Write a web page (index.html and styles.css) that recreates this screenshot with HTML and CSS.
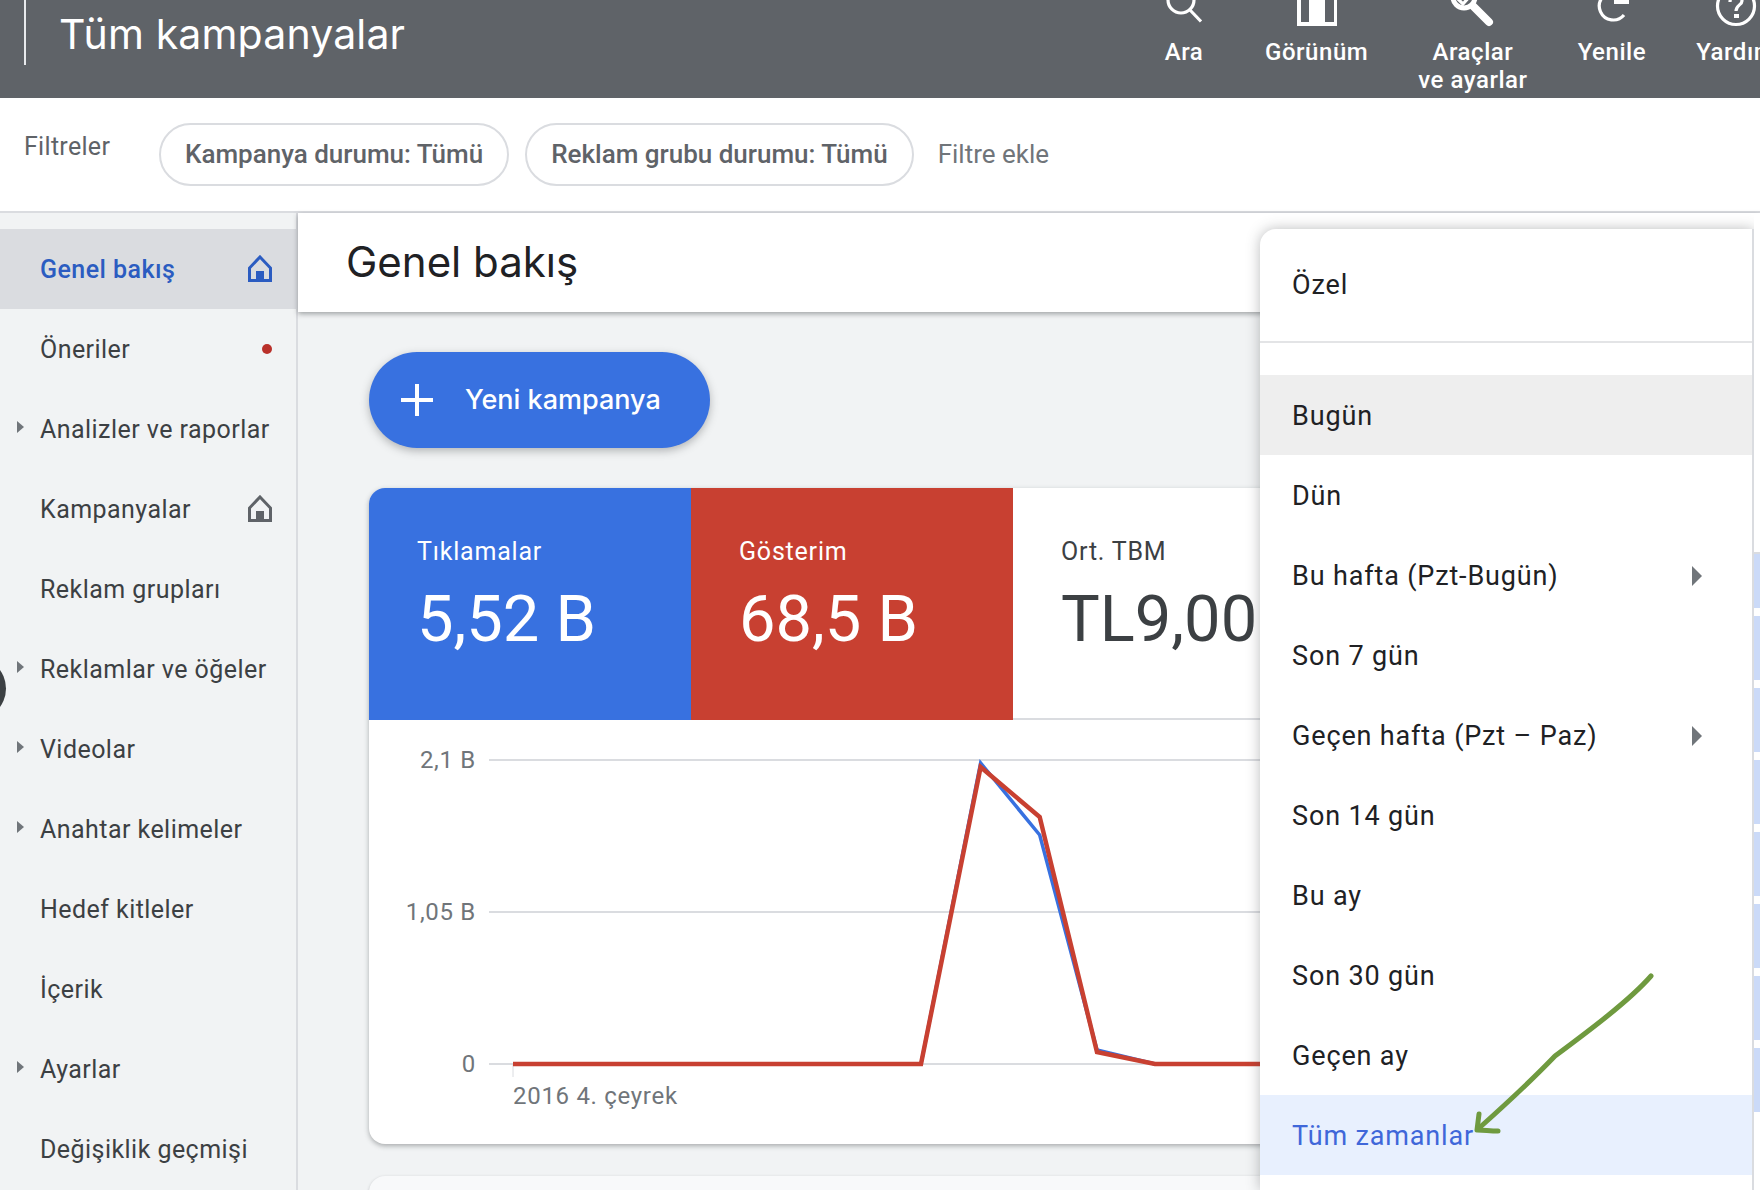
FILE: index.html
```html
<!DOCTYPE html>
<html>
<head>
    <meta http-equiv="Content-Type" content="text/html; charset=UTF-8">
    <title>Tüm kampanyalar</title>
    <link rel="stylesheet" href="styles.css">
</head>

<body>
    <div class="page">
        <div class="topbar">
            <div class="topbar-rule"></div>
            <div class="topbar-title">Tüm kampanyalar</div>
            <div class="actions">
                <div class="action action-search">
                    <svg class="action-icon" viewBox="0 0 48 34">
                        <circle cx="21" cy="0" r="13" class="icon-line"/>
                        <path d="M30 10 L41 21.5" class="icon-line"/>
                    </svg>
                    <span>Ara</span>
                </div>
                <div class="action">
                    <svg class="action-icon" viewBox="0 0 48 34">
                        <path d="M4 -4 H44 V26 H4 Z M8 -4 V22 H16 V-4 Z M32 -4 V22 H41 V-4 Z" class="icon-fill" fill-rule="evenodd"/>
                    </svg>
                    <span>Görünüm</span>
                </div>
                <div class="action">
                    <svg class="action-icon" viewBox="0 0 48 34">
                        <circle cx="15" cy="-3" r="11" class="icon-line icon-thick"/>
                        <path d="M24 6 L40 22" class="icon-line icon-handle"/>
                        <path d="M9 -1 L14 4 L21 -4" class="icon-line"/>
                    </svg>
                    <span>Araçlar<br>ve ayarlar</span>
                </div>
                <div class="action">
                    <svg class="action-icon" viewBox="0 0 48 34">
                        <path d="M26 -8 A14 14 0 1 0 36 15" class="icon-line"/>
                        <rect x="26" y="-4" width="15" height="8" class="icon-fill"/>
                    </svg>
                    <span>Yenile</span>
                </div>
                <div class="action">
                    <svg class="action-icon" viewBox="0 0 48 34">
                        <circle cx="24" cy="6" r="18.5" class="icon-line"/>
                        <path d="M18 2 C18 -6 30 -6 30 1 C30 5 24 5 24 11" class="icon-line"/>
                        <rect x="22" y="14" width="5" height="4" class="icon-fill"/>
                    </svg>
                    <span>Yardım</span>
                </div>
            </div>
        </div>

        <div class="filters">
            <div class="filters-label">Filtreler</div>
            <div class="chip">Kampanya durumu: Tümü</div>
            <div class="chip">Reklam grubu durumu: Tümü</div>
            <div class="filters-add">Filtre ekle</div>
        </div>

        <div class="content">
            <div class="sidebar">
                <div class="nav-row nav-active">
                    <span class="nav-arrow"></span>Genel bakış
                    <svg class="nav-home" viewBox="0 0 24 27">
                        <path d="M12 2 L22.5 13 V25.5 H1.5 V13 Z" class="home-line"/>
                        <rect x="8" y="16" width="8" height="9" class="home-door"/>
                    </svg>
                </div>
                <div class="nav-row"><span class="nav-arrow"></span>Öneriler<span class="nav-dot"></span></div>
                <div class="nav-row"><span class="nav-arrow nav-arrow-on"></span>Analizler ve raporlar</div>
                <div class="nav-row">
                    <span class="nav-arrow"></span>Kampanyalar
                    <svg class="nav-home" viewBox="0 0 24 27">
                        <path d="M12 2 L22.5 13 V25.5 H1.5 V13 Z" class="home-line"/>
                        <rect x="8" y="16" width="8" height="9" class="home-door"/>
                    </svg>
                </div>
                <div class="nav-row"><span class="nav-arrow"></span>Reklam grupları</div>
                <div class="nav-row"><span class="nav-arrow nav-arrow-on"></span>Reklamlar ve öğeler</div>
                <div class="nav-row"><span class="nav-arrow nav-arrow-on"></span>Videolar</div>
                <div class="nav-row"><span class="nav-arrow nav-arrow-on"></span>Anahtar kelimeler</div>
                <div class="nav-row"><span class="nav-arrow"></span>Hedef kitleler</div>
                <div class="nav-row"><span class="nav-arrow"></span>İçerik</div>
                <div class="nav-row"><span class="nav-arrow nav-arrow-on"></span>Ayarlar</div>
                <div class="nav-row"><span class="nav-arrow"></span>Değişiklik geçmişi</div>
            </div>

            <div class="main">
                <div class="main-head">Genel bakış</div>
                <div class="main-body">
                    <div class="new-campaign">
                        <svg class="plus" viewBox="0 0 32 32">
                            <path d="M16 0 V32 M0 16 H32"/>
                        </svg>
                        Yeni kampanya
                    </div>

                    <div class="card">
                        <div class="tiles">
                            <div class="tile tile-blue">
                                <div class="tile-label">Tıklamalar</div>
                                <div class="tile-value">5,52 B</div>
                            </div>
                            <div class="tile tile-red">
                                <div class="tile-label">Gösterim</div>
                                <div class="tile-value">68,5 B</div>
                            </div>
                            <div class="tile tile-plain">
                                <div class="tile-label">Ort. TBM</div>
                                <div class="tile-value">TL9,00</div>
                            </div>
                        </div>
                        <svg class="chart" viewBox="369 720 900 424">
                            <path d="M489 760 H1269 M489 912 H1269 M489 1064 H1269" class="chart-grid"/>
                            <path d="M513 1064 V1077" class="chart-tick"/>
                            <text x="476" y="768" class="chart-text chart-y">2,1 B</text>
                            <text x="476" y="920" class="chart-text chart-y">1,05 B</text>
                            <text x="476" y="1072" class="chart-text chart-y">0</text>
                            <text x="513" y="1104" class="chart-text">2016 4. çeyrek</text>
                            <path d="M513 1064 H921 L980.6 763 L1039.7 835 L1097 1050 L1155 1064 H1269" class="line-blue"/>
                            <path d="M513 1064 H921 L980.6 767 L1039.7 817 L1097 1052 L1155 1064 H1269" class="line-red"/>
                        </svg>
                    </div>

                    <div class="card-next"></div>
                </div>
            </div>
        </div>

        <div class="edge-blob"></div>

        <div class="range-menu">
            <div class="range-custom">Özel</div>
            <div class="range-list">
                <div class="range-row range-hover">Bugün</div>
                <div class="range-row">Dün</div>
                <div class="range-row">Bu hafta (Pzt-Bugün)<span class="range-arrow"></span></div>
                <div class="range-row">Son 7 gün</div>
                <div class="range-row">Geçen hafta (Pzt – Paz)<span class="range-arrow"></span></div>
                <div class="range-row">Son 14 gün</div>
                <div class="range-row">Bu ay</div>
                <div class="range-row">Son 30 gün</div>
                <div class="range-row">Geçen ay</div>
                <div class="range-row range-selected">Tüm zamanlar</div>
            </div>
            <svg class="scribble" viewBox="1470 970 190 170">
                <path d="M1651 976 C1630 1000 1590 1030 1555 1056 C1530 1082 1505 1105 1478 1129"/>
                <path d="M1479 1114 L1477 1130 C1484 1130 1490 1131 1498 1131"/>
            </svg>
        </div>

        <div class="peek">
            <div class="peek-bar peek-first"></div>
            <div class="peek-bar"></div>
            <div class="peek-bar"></div>
            <div class="peek-bar"></div>
            <div class="peek-bar"></div>
            <div class="peek-bar"></div>
            <div class="peek-bar"></div>
            <div class="peek-bar"></div>
        </div>
    </div>
</body>

</html>
```

FILE: styles.css
```css
body {
    margin: 0;
    font-family: Roboto, "Liberation Sans", sans-serif;
    color: #3c4043;
}

.page {
    position: relative;
    width: 1760px;
    height: 1190px;
    overflow: hidden;
    background: #f1f3f4;
}

/* top bar */
.topbar {
    display: flex;
    height: 98px;
    background: #5f6368;
    color: #fff;
}

.topbar-rule {
    flex: none;
    width: 2px;
    height: 65px;
    margin-left: 24px;
    background: #e8eaed;
}

.topbar-title {
    flex: none;
    width: 360px;
    margin-left: 33px;
    font-family: Inter, Roboto, sans-serif;
    font-size: 41px;
    letter-spacing: 0.15px;
    line-height: 68px;
}

.actions {
    display: flex;
    flex: none;
    gap: 50px;
    margin-left: 741px;
}

.action {
    display: flex;
    flex-direction: column;
    align-items: center;
    font-size: 24px;
    font-weight: 500;
    letter-spacing: 0.55px;
    line-height: 28px;
    text-align: center;
}

.action-search {
    margin-right: 7px;
}

.action-icon {
    flex: none;
    width: 48px;
    height: 34px;
    margin-bottom: 4px;
}

.icon-line {
    fill: none;
    stroke: #fff;
    stroke-width: 3.2;
}

.icon-thick {
    stroke-width: 5;
}

.icon-handle {
    stroke-width: 8;
    stroke-linecap: round;
}

.icon-fill {
    fill: #fff;
}

/* filters */
.filters {
    display: flex;
    align-items: center;
    gap: 16px;
    height: 113px;
    padding-left: 24px;
    background: #fff;
    border-bottom: 2px solid #dadce0;
}

.filters-label {
    width: 119px;
    margin-bottom: 16px;
    font-size: 25px;
    letter-spacing: 0.3px;
    color: #5f6368;
}

.chip {
    height: 59px;
    padding: 0 24px;
    border: 2px solid #dadce0;
    border-radius: 32px;
    font-size: 26px;
    font-weight: 500;
    line-height: 59px;
    color: #5f6368;
}

.filters-add {
    margin: 0 0 1px 8px;
    font-size: 26px;
    color: #70757a;
}

/* body */
.content {
    display: flex;
    height: 977px;
}

.sidebar {
    flex: none;
    width: 296px;
    padding-top: 16px;
    border-right: 2px solid #dadce0;
}

.nav-row {
    display: flex;
    align-items: center;
    height: 80px;
    padding-right: 24px;
    font-size: 25px;
    letter-spacing: 0.45px;
}

.nav-active {
    width: 272px;
    padding-right: 26px;
    background: #dadce0;
    font-weight: 500;
    color: #2b5cc1;
}

.nav-arrow {
    flex: none;
    width: 23px;
    height: 13px;
    margin: -4px 0 0 17px;
}

.nav-arrow-on {
    position: relative;
}

.nav-arrow-on::before {
    content: "";
    position: absolute;
    left: 0;
    top: 0;
    border-left: 7px solid #70757a;
    border-top: 6.5px solid transparent;
    border-bottom: 6.5px solid transparent;
}

.nav-home {
    flex: none;
    width: 24px;
    height: 27px;
    margin: -1px 0 0 auto;
}

.home-line {
    fill: none;
    stroke: #5f6368;
    stroke-width: 3;
}

.home-door {
    fill: #5f6368;
}

.nav-active .home-line {
    stroke: #2b5cc1;
}

.nav-active .home-door {
    fill: #2b5cc1;
}

.nav-dot {
    flex: none;
    width: 10px;
    height: 10px;
    margin-left: auto;
    border-radius: 50%;
    background: #b9302a;
}

.edge-blob {
    position: absolute;
    left: -57px;
    top: 657px;
    width: 63px;
    height: 63px;
    border-radius: 50%;
    background: #3c4043;
}

.main {
    flex: 1;
    min-width: 0;
}

.main-head {
    position: relative;
    height: 99px;
    padding-left: 48px;
    background: #fff;
    box-shadow: 0 2px 5px rgba(60, 64, 67, 0.45);
    font-family: Inter, Roboto, sans-serif;
    font-size: 42px;
    line-height: 97px;
    color: #202124;
}

.main-body {
    padding: 40px 0 0 71px;
}

.new-campaign {
    display: flex;
    align-items: center;
    width: 341px;
    height: 96px;
    padding-bottom: 2px;
    box-sizing: border-box;
    border-radius: 48px;
    background: #3871e0;
    box-shadow: 0 3px 8px rgba(60, 64, 67, 0.35);
    font-family: Inter, Roboto, sans-serif;
    font-size: 27px;
    font-weight: 500;
    color: #fff;
}

.plus {
    width: 32px;
    height: 32px;
    margin: 2px 32px 0 32px;
    fill: none;
    stroke: #fff;
    stroke-width: 4;
}

.card {
    width: 1400px;
    height: 656px;
    margin-top: 40px;
    border-radius: 16px;
    background: #fff;
    box-shadow: 0 2px 5px rgba(60, 64, 67, 0.4);
    overflow: hidden;
}

.tiles {
    display: flex;
    height: 232px;
}

.tile {
    flex: none;
    box-sizing: border-box;
    width: 322px;
    padding: 47px 0 0 48px;
}

.tile-blue {
    background: #3871e0;
    color: #fff;
}

.tile-red {
    background: #c84031;
    color: #fff;
}

.tile-plain {
    flex: 1;
    border-bottom: 2px solid #dadce0;
}

.tile-label {
    font-size: 25px;
    letter-spacing: 0.8px;
    line-height: 34px;
}

.tile-value {
    margin-top: 10px;
    font-size: 65px;
    line-height: 80px;
}

.chart {
    display: block;
    width: 900px;
    height: 424px;
}

.chart-grid {
    fill: none;
    stroke: #dadce0;
    stroke-width: 2;
}

.chart-tick {
    fill: none;
    stroke: #dadce0;
    stroke-width: 1;
}

.chart-text {
    font-size: 24px;
    letter-spacing: 0.7px;
    fill: #70757a;
}

.chart-y {
    text-anchor: end;
}

.line-blue {
    fill: none;
    stroke: #3871e0;
    stroke-width: 3.5;
}

.line-red {
    fill: none;
    stroke: #c84031;
    stroke-width: 4.5;
}

.card-next {
    width: 1400px;
    height: 60px;
    margin-top: 32px;
    border-radius: 16px;
    background: #f8f9fa;
    box-shadow: 0 1px 3px rgba(60, 64, 67, 0.3);
}

/* date range menu, sits over the page */
.range-menu {
    position: absolute;
    left: 1260px;
    top: 229px;
    width: 492px;
    height: 961px;
    border-right: 2px solid #dadce0;
    border-radius: 16px 0 0 0;
    background: #fff;
    box-shadow: 0 0 14px rgba(60, 64, 67, 0.35);
    font-size: 27px;
    letter-spacing: 0.85px;
    color: #202124;
}

.range-custom {
    height: 112px;
    padding-left: 32px;
    border-bottom: 2px solid #e3e4e6;
    line-height: 112px;
}

.range-list {
    padding-top: 32px;
}

.range-row {
    display: flex;
    align-items: center;
    box-sizing: border-box;
    height: 80px;
    padding: 2px 0 0 32px;
}

.range-hover {
    background: #eeeeee;
}

.range-selected {
    background: #e8f0fe;
    color: #3f67d9;
}

.range-arrow {
    position: absolute;
    left: 432px;
    border-left: 10px solid #70757a;
    border-top: 10px solid transparent;
    border-bottom: 10px solid transparent;
}

.scribble {
    position: absolute;
    left: 210px;
    top: 741px;
    width: 190px;
    height: 170px;
    fill: none;
    stroke: #6f9a3f;
    stroke-width: 5;
    stroke-linecap: round;
    stroke-linejoin: round;
}

/* what shows behind the menu on the right edge */
.peek {
    position: absolute;
    left: 1754px;
    top: 552px;
    display: flex;
    flex-direction: column;
    gap: 8px;
    width: 6px;
    height: 638px;
    background: #fff;
    border-top: 2px solid #dadce0;
    box-sizing: border-box;
}

.peek-bar {
    flex: none;
    height: 64px;
    background: #cbdaf8;
}

.peek-first {
    height: 54px;
}

/* strip above the peek bars */
.page::after {
    content: "";
    position: absolute;
    left: 1754px;
    top: 213px;
    width: 6px;
    height: 339px;
    background: #fff;
}
```
